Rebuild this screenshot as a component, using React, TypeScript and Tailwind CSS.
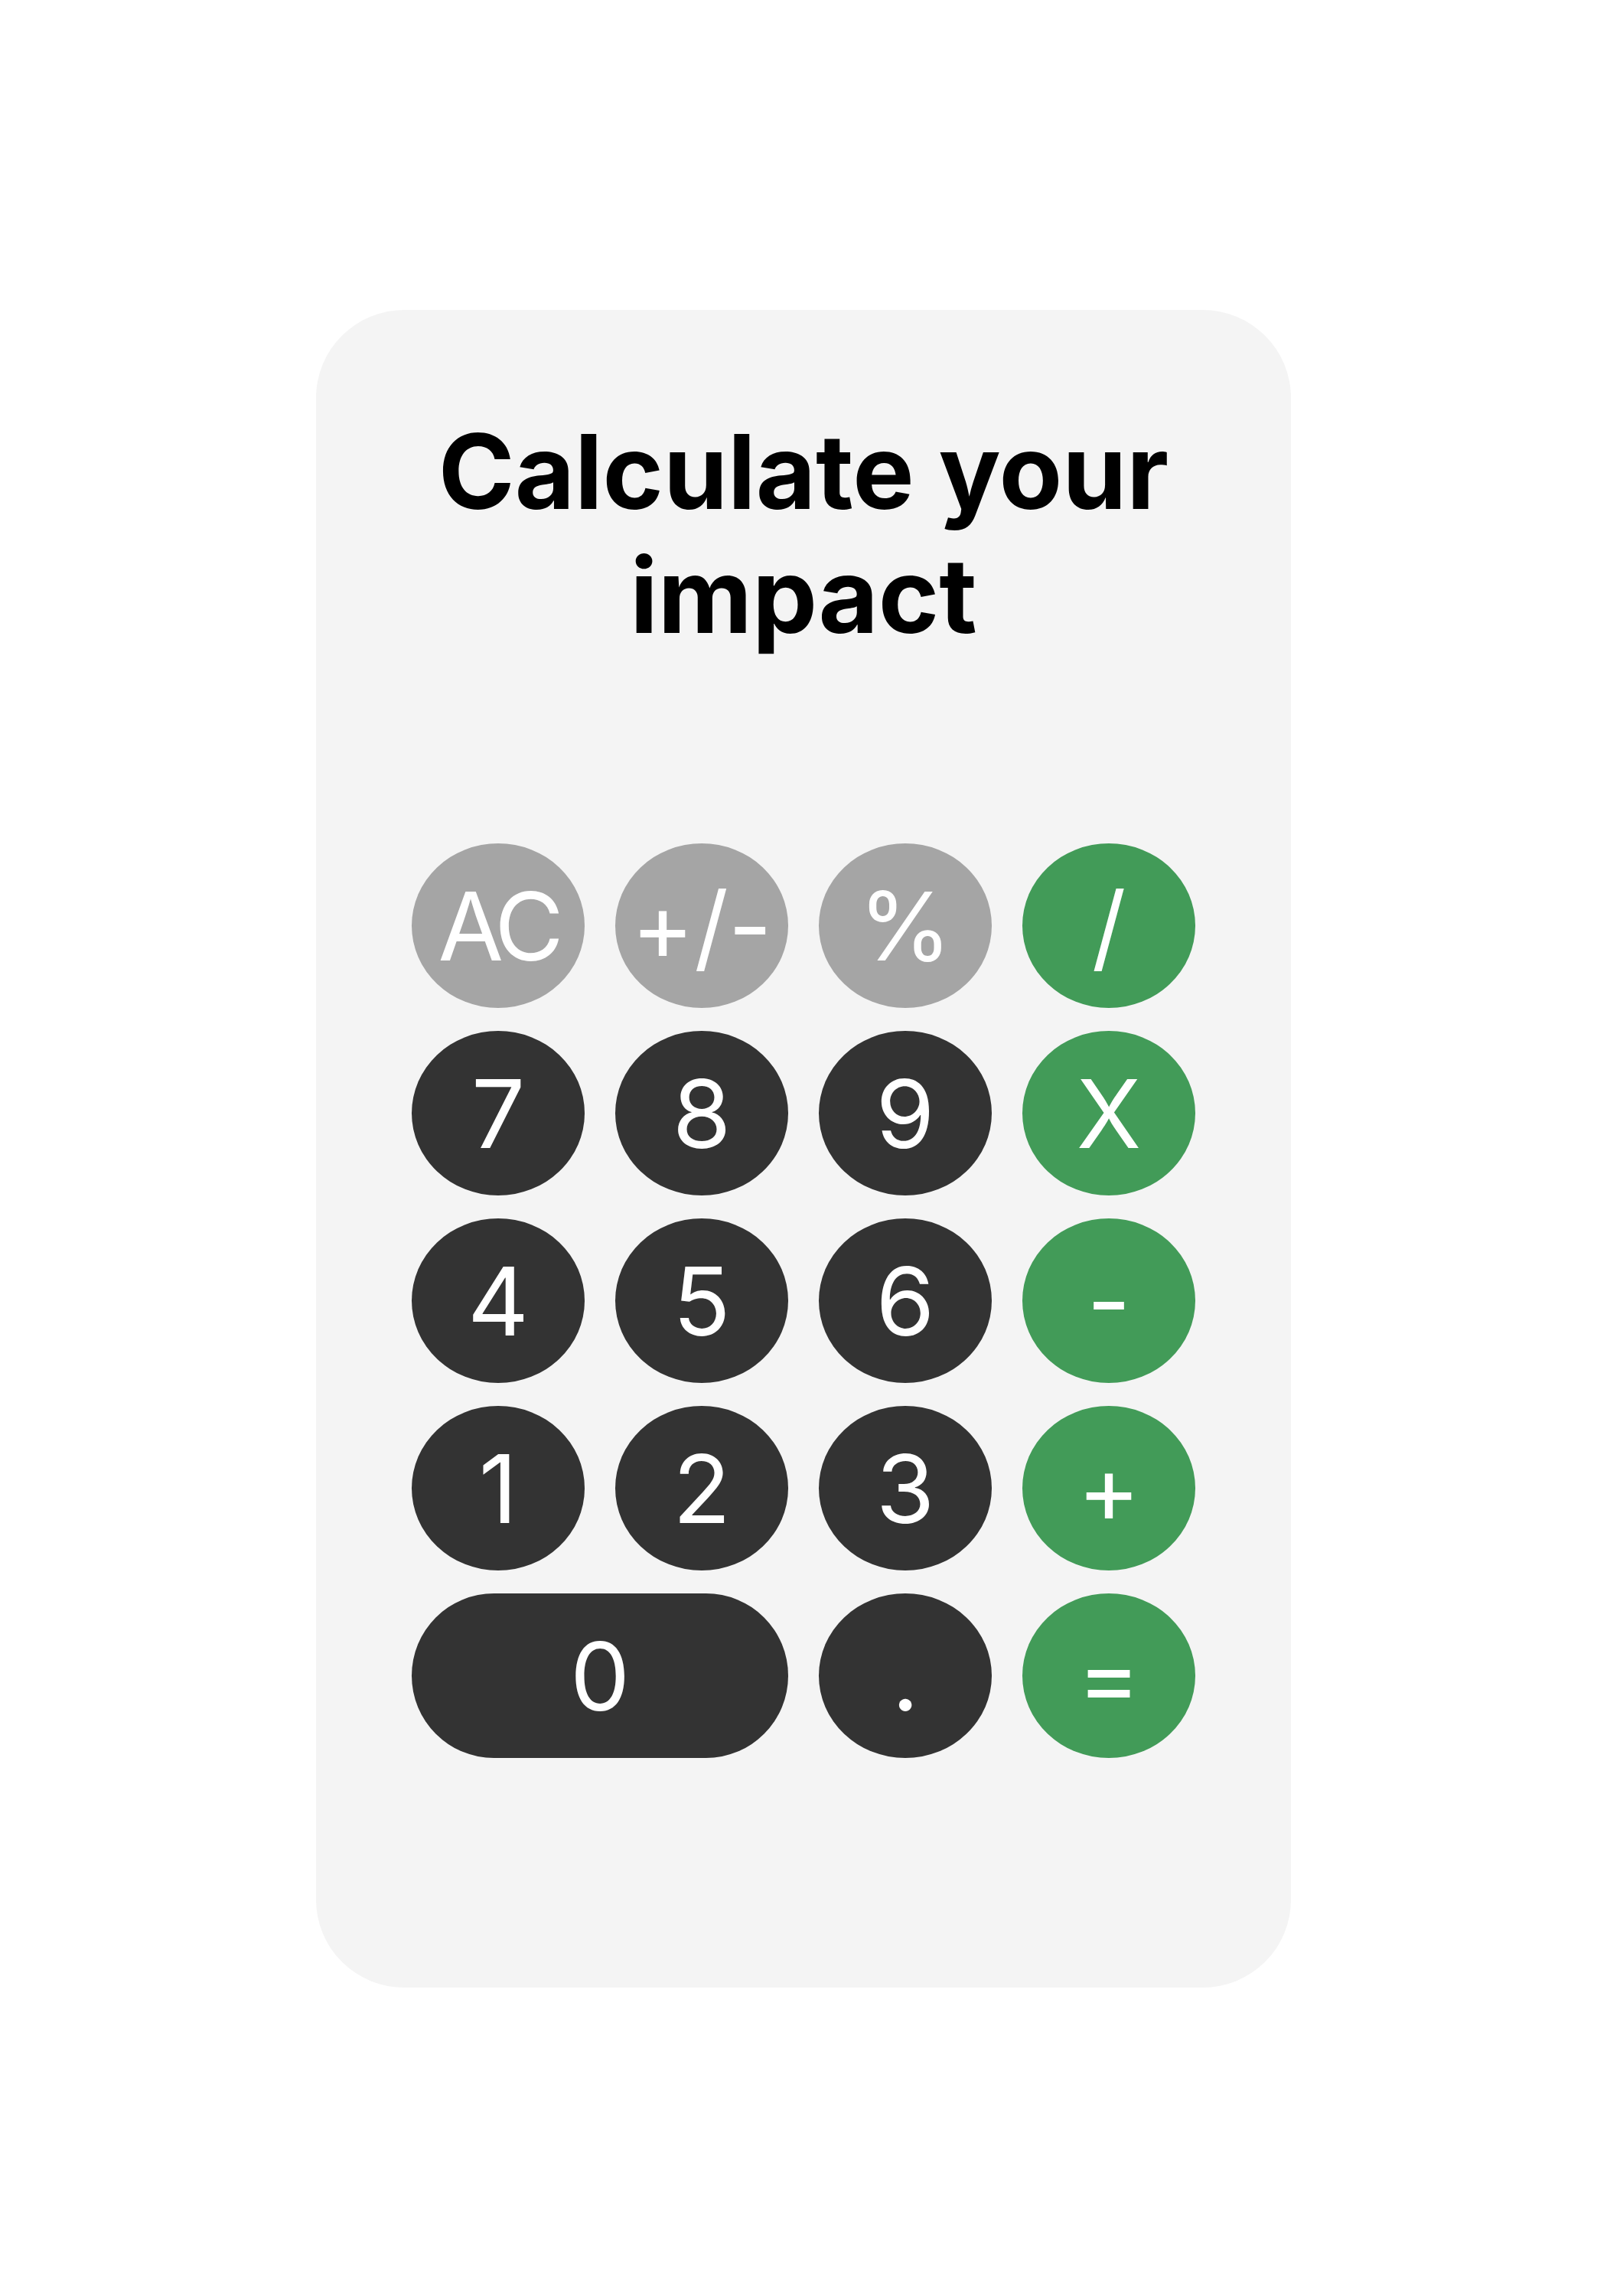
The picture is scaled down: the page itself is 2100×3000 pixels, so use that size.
import React from "react";

type Key = {
  label: string;
  kind: "fn" | "num" | "op";
  wide?: boolean;
};

const keys: Key[] = [
  { label: "AC", kind: "fn" },
  { label: "+/-", kind: "fn" },
  { label: "%", kind: "fn" },
  { label: "/", kind: "op" },
  { label: "7", kind: "num" },
  { label: "8", kind: "num" },
  { label: "9", kind: "num" },
  { label: "X", kind: "op" },
  { label: "4", kind: "num" },
  { label: "5", kind: "num" },
  { label: "6", kind: "num" },
  { label: "-", kind: "op" },
  { label: "1", kind: "num" },
  { label: "2", kind: "num" },
  { label: "3", kind: "num" },
  { label: "+", kind: "op" },
  { label: "0", kind: "num", wide: true },
  { label: ".", kind: "num" },
  { label: "=", kind: "op" },
];

const kindClass = {
  fn: "bg-[#a5a5a5]",
  num: "bg-[#333333]",
  op: "bg-[#429b58]",
};

function CalcKey({ k }: { k: Key }) {
  return (
    <button
      className={`${kindClass[k.kind]} ${
        k.wide ? "col-span-2 rounded-full" : "rounded-[50%]"
      } ${
        k.label === "AC" ? "tracking-[-0.06em]" : ""
      } h-[215px] flex items-center justify-center text-white text-[124px] leading-none font-normal font-[Inter,'Liberation_Sans',sans-serif]`}
    >
      {k.label}
    </button>
  );
}

export default function App() {
  return (
    <div className="min-h-[3000px] bg-white pt-[405px] font-[Inter,'Liberation_Sans',sans-serif]">
      {/* Calculator card */}
      <div className="mx-auto w-[1274px] h-[2192px] bg-[#f4f4f4] rounded-[115px] pt-[130px]">
        <h1 className="text-center text-black font-bold text-[135px] leading-[162px]">
          Calculate your
          <br />
          impact
        </h1>

        <div className="mt-[243px] flex justify-center">
          <div className="grid grid-cols-[repeat(4,226px)] gap-x-[40px] gap-y-[30px]">
            {keys.map((k) => (
              <CalcKey key={k.label} k={k} />
            ))}
          </div>
        </div>
      </div>
    </div>
  );
}
